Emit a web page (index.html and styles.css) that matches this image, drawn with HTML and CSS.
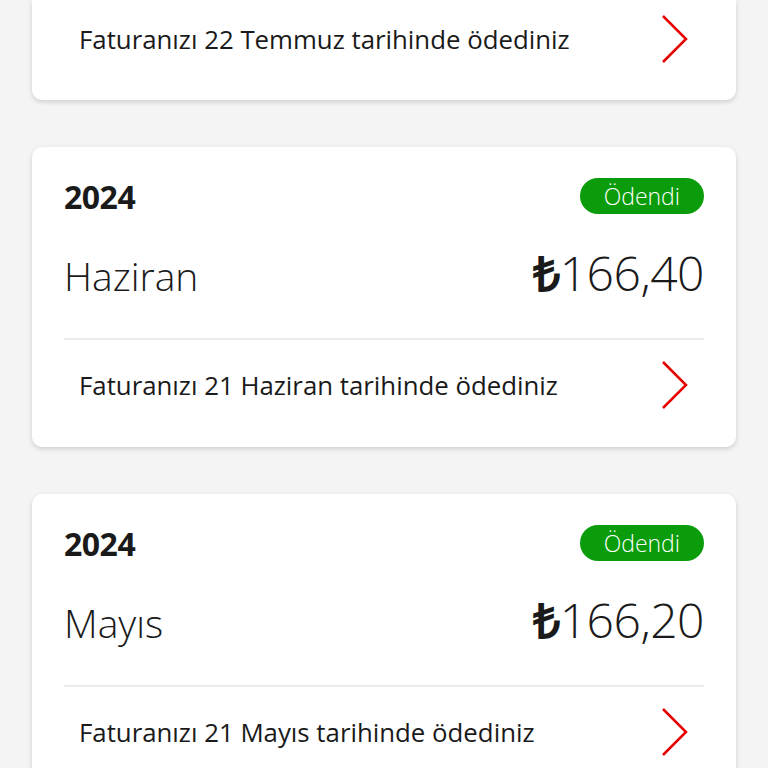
FILE: index.html
```html
<!DOCTYPE html>
<html lang="tr">
<head>
  <meta charset="UTF-8" />
  <meta name="viewport" content="width=device-width, initial-scale=1.0" />
  <title>Faturalarım</title>
  <link rel="stylesheet" href="styles.css">
</head>
<body>
  <div class="bills">
    <!-- scrolled list: only the bottom of the July card is visible -->
    <div class="bill bill-tail">
      <a class="bill-row" href="#">
        <span>Faturanızı 22 Temmuz tarihinde ödediniz</span>
        <svg class="chevron" viewBox="0 0 28 50" width="28" height="50"><path d="M2 2 L25 25 L2 48" /></svg>
      </a>
    </div>

    <div class="bill">
      <div class="bill-head">
        <span class="year">2024</span>
        <span class="badge">Ödendi</span>
      </div>
      <div class="bill-main">
        <span class="month">Haziran</span>
        <span class="amount"><b>₺</b>166,40</span>
      </div>
      <a class="bill-row" href="#">
        <span>Faturanızı 21 Haziran tarihinde ödediniz</span>
        <svg class="chevron" viewBox="0 0 28 50" width="28" height="50"><path d="M2 2 L25 25 L2 48" /></svg>
      </a>
    </div>

    <div class="bill">
      <div class="bill-head">
        <span class="year">2024</span>
        <span class="badge">Ödendi</span>
      </div>
      <div class="bill-main">
        <span class="month">Mayıs</span>
        <span class="amount"><b>₺</b>166,20</span>
      </div>
      <a class="bill-row" href="#">
        <span>Faturanızı 21 Mayıs tarihinde ödediniz</span>
        <svg class="chevron" viewBox="0 0 28 50" width="28" height="50"><path d="M2 2 L25 25 L2 48" /></svg>
      </a>
    </div>
  </div>
</body>
</html>
```

FILE: styles.css
```css
* {
  margin: 0;
  padding: 0;
  box-sizing: border-box;
}
body {
  font-family: 'Open Sans', sans-serif;
  background-color: #f4f4f4;
  color: #1a1a1a;
}
.bills {
  display: flex;
  flex-direction: column;
  gap: 47px;
  padding: 0 32px 40px;
}
.bill {
  background: #ffffff;
  border-radius: 10px;
  box-shadow: 0 2px 5px rgba(0, 0, 0, 0.16);
  height: 300px;
  padding: 31px 32px 0;
}
.bill-tail {
  height: 100px;
  padding: 0 32px 16px;
  border-radius: 0 0 10px 10px;
  display: flex;
  flex-direction: column;
  justify-content: flex-end;
}
.bill-tail .bill-row {
  flex: none;
}
.bill-head {
  display: flex;
  justify-content: space-between;
  align-items: center;
  height: 36px;
}
.year {
  font-weight: 700;
  font-size: 32px;
  letter-spacing: -0.5px;
}
.badge {
  background: #0a9c0a;
  color: #ffffff;
  font-size: 23px;
  font-weight: 300;
  line-height: 36px;
  height: 36px;
  padding: 0 24px;
  border-radius: 18px;
}
.bill-main {
  display: flex;
  justify-content: space-between;
  align-items: center;
  margin-top: 32px;
  height: 94px;
  padding-bottom: 40px;
  border-bottom: 2px solid #ebebeb;
  font-weight: 300;
}
.month {
  font-size: 39px;
  padding-top: 6px;
}
.amount {
  font-size: 48px;
  letter-spacing: -0.5px;
}
.amount b {
  font-weight: 700;
}
.bill-row {
  display: flex;
  justify-content: space-between;
  align-items: center;
  padding: 0 15px;
  height: 90px;
  color: #1a1a1a;
  text-decoration: none;
  font-size: 25.8px;
}
.chevron path {
  fill: none;
  stroke: #e60000;
  stroke-width: 2.5;
}
```
